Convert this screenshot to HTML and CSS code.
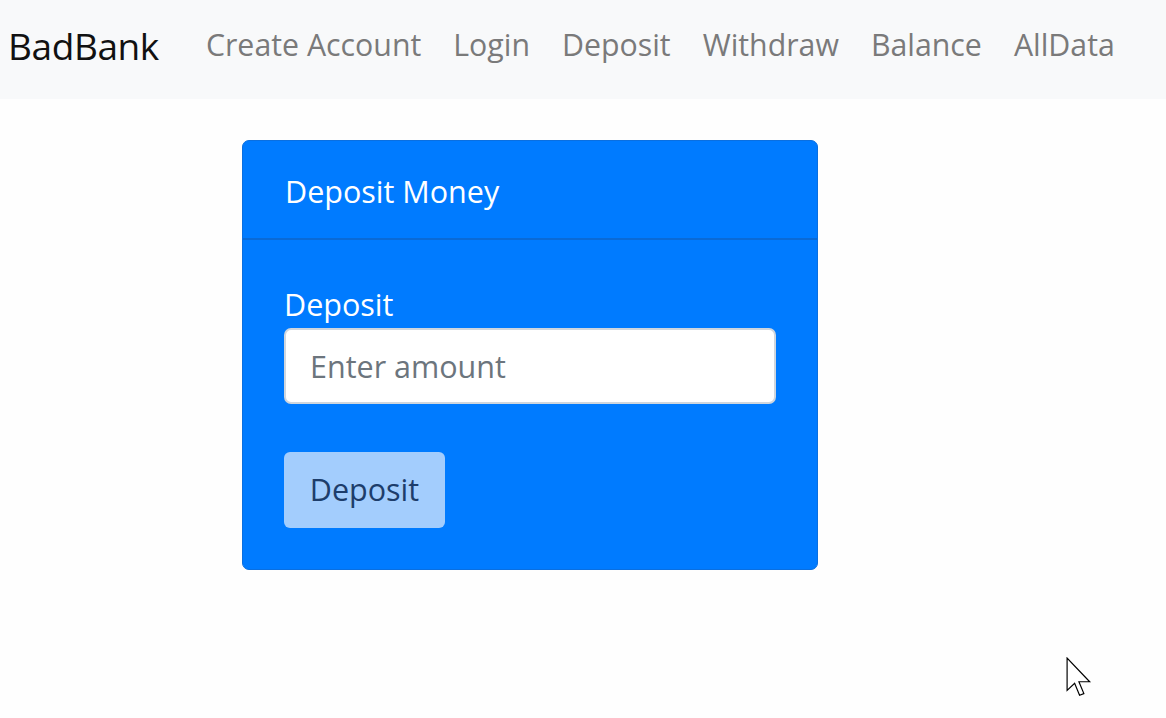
FILE: index.html
```html
<!DOCTYPE html>
<html lang="en">
<head>
<meta charset="utf-8">
<title>BadBank</title>
<link rel="stylesheet" href="styles.css">
</head>
<body>
<nav class="navbar">
  <a class="brand" href="#">BadBank</a>
  <ul class="nav">
    <li><a class="nav-link" href="#">Create Account</a></li>
    <li><a class="nav-link" href="#">Login</a></li>
    <li><a class="nav-link" href="#">Deposit</a></li>
    <li><a class="nav-link" href="#">Withdraw</a></li>
    <li><a class="nav-link" href="#">Balance</a></li>
    <li><a class="nav-link" href="#">AllData</a></li>
  </ul>
</nav>
<main class="container">
  <div class="card">
    <div class="card-header">Deposit Money</div>
    <div class="card-body">
      <label class="label" for="amount">Deposit</label>
      <input class="input" id="amount" type="text" placeholder="Enter amount">
      <div class="spacer"></div>
      <button class="btn" type="button">Deposit</button>
    </div>
  </div>
</main>
<svg class="cursor" width="28" height="43" viewBox="0 0 13 20" aria-hidden="true">
  <path d="M0.5 0.5 L0.5 15.5 L4 12.2 L6.3 17.8 L8.3 17 L6 11.5 L11 11.5 Z" fill="#fff" stroke="#000" stroke-width="0.55" stroke-linejoin="miter"/>
</svg>
</body>
</html>
```

FILE: styles.css
```css
* { box-sizing: border-box; }
html, body { margin: 0; padding: 0; }
body {
  font-family: "Open Sans", "Noto Sans", "Liberation Sans", sans-serif;
  background: #fefefe;
  color: #212529;
  width: 1166px;
  height: 718px;
  overflow: hidden;
  position: relative;
}
.navbar {
  height: 99px;
  background: #f8f9fa;
  display: flex;
  align-items: center;
  padding: 0 0 0 8px;
}
.brand {
  font-size: 37px;
  color: #111;
  text-decoration: none;
  margin-right: 31px;
  letter-spacing: -0.4px;
  line-height: 1;
  padding-bottom: 8px;
}
.nav {
  list-style: none;
  margin: 0;
  padding: 0;
  display: flex;
}
.nav-link {
  display: block;
  font-size: 30.3px;
  color: #7a7a7a;
  text-decoration: none;
  padding: 0 16px 8px;
  line-height: 1;
}
.container {
  padding: 41px 0 0 242px;
}
.card {
  width: 576px;
  background: #007bff;
  border: 1px solid #0a6fe0;
  border-radius: 7px;
  color: #fff;
  overflow: hidden;
}
.card-header {
  height: 99px;
  padding: 3px 42px 0;
  display: flex;
  align-items: center;
  font-size: 30.5px;
  border-bottom: 2px solid #0a6ad6;
}
.card-body {
  padding: 40px 41px 41px 41px;
  display: flex;
  flex-direction: column;
  align-items: flex-start;
}
.label {
  font-size: 30.5px;
  line-height: 48px;
}
.input {
  width: 492px;
  height: 76px;
  border: 2px solid #cfd6de;
  border-radius: 7px;
  background: #fff;
  padding: 0 24px;
  font-family: inherit;
  font-size: 30.5px;
  color: #495057;
  outline: none;
}
.input::placeholder { color: #6c757d; opacity: 1; }
.spacer { height: 48px; }
.btn {
  height: 76px;
  width: 161px;
  border: none;
  border-radius: 6px;
  background: #a3cdfd;
  color: #1d3d6b;
  font-family: inherit;
  font-size: 30.5px;
  padding: 0 0 2px 0;
  cursor: default;
}
.cursor {
  position: absolute;
  left: 1066px;
  top: 657px;
}
```
